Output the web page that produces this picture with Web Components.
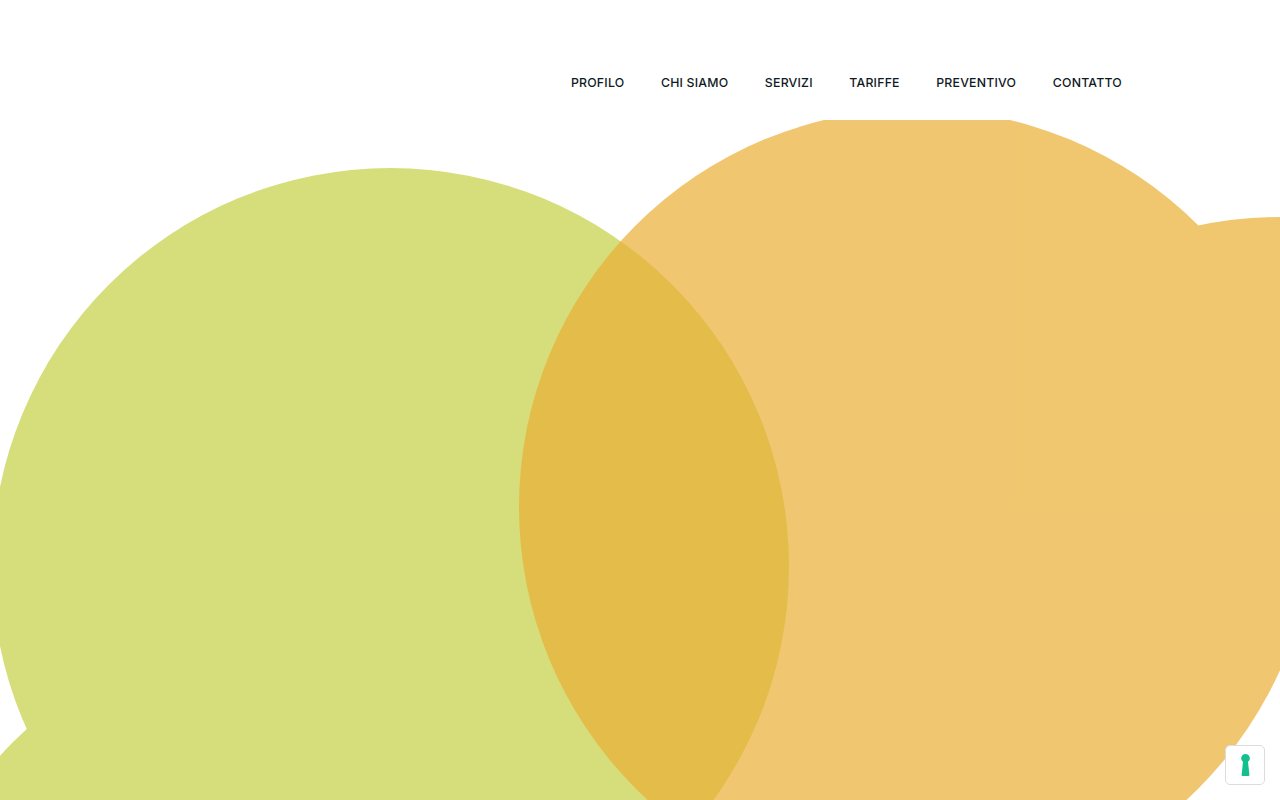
<!DOCTYPE html>
<html lang="it">
<head>
<meta charset="utf-8">
<title>Profilo</title>
<style>
  html, body { margin: 0; height: 100%; background: #fff; overflow: hidden; }
  body { font-family: "Inter", "Liberation Sans", sans-serif; color: #0f1a24; }
</style>
</head>
<body>
<site-header>
  <nav-link>PROFILO</nav-link>
  <nav-link>CHI SIAMO</nav-link>
  <nav-link>SERVIZI</nav-link>
  <nav-link>TARIFFE</nav-link>
  <nav-link>PREVENTIVO</nav-link>
  <nav-link>CONTATTO</nav-link>
</site-header>
<hero-circles></hero-circles>
<key-badge></key-badge>

<script>
class SiteHeader extends HTMLElement {
  constructor() {
    super();
    this.attachShadow({ mode: "open" }).innerHTML = `
      <style>
        :host {
          display: flex;
          justify-content: flex-end;
          align-items: center;
          gap: 36.500px;
          height: 120px;
          padding: 45px 158px 0 0;
          box-sizing: border-box;
          background: #fff;
        }
      </style>
      <slot></slot>
    `;
  }
}

class NavLink extends HTMLElement {
  constructor() {
    super();
    this.attachShadow({ mode: "open" }).innerHTML = `
      <style>
        :host {
          display: block;
          font-size: 12.3px;
          line-height: 16px;
          font-weight: 550;
          letter-spacing: 0.22px;
          white-space: nowrap;
          cursor: pointer;
        }
      </style>
      <slot></slot>
    `;
  }
}

class HeroCircles extends HTMLElement {
  constructor() {
    super();
    this.attachShadow({ mode: "open" }).innerHTML = `
      <style>
        :host { display: block; height: 680px; overflow: hidden; }
        svg { display: block; }
      </style>
      <svg width="1280" height="680" viewBox="0 120 1280 680">
        <g fill="#d6de7c">
          <circle cx="390.500" cy="566.500" r="398.500"></circle>
          <circle cx="294" cy="1024" r="398"></circle>
        </g>
        <g fill="#eaae33" opacity="0.7">
          <path d="M519 507a398 398 0 1 0 796 0a398 398 0 1 0 -796 0Z"></path>
          <path d="M1190 227.300A400 400 0 0 1 1280 217L1280 500L1190 500Z"></path>
        </g>
      </svg>
    `;
  }
}

class KeyBadge extends HTMLElement {
  constructor() {
    super();
    this.attachShadow({ mode: "open" }).innerHTML = `
      <style>
        :host {
          position: fixed;
          right: 15px;
          bottom: 15px;
          width: 40px;
          height: 40px;
          box-sizing: border-box;
          display: flex;
          align-items: center;
          justify-content: center;
          background: #fff;
          border: 1px solid #dcdcdc;
          border-radius: 5px;
        }
      </style>
      <svg width="9" height="22" viewBox="0 0 9 22">
        <path fill="#14bf8f" d="M4.500 0a4.300 4.300 0 0 1 2.500 7.800L8.400 21a1 1 0 0 1-1 1H1.600a1 1 0 0 1-1-1L2 7.800A4.300 4.300 0 0 1 4.500 0Z"></path>
      </svg>
    `;
  }
}

customElements.define("site-header", SiteHeader);
customElements.define("nav-link", NavLink);
customElements.define("hero-circles", HeroCircles);
customElements.define("key-badge", KeyBadge);
</script>
</body>
</html>
